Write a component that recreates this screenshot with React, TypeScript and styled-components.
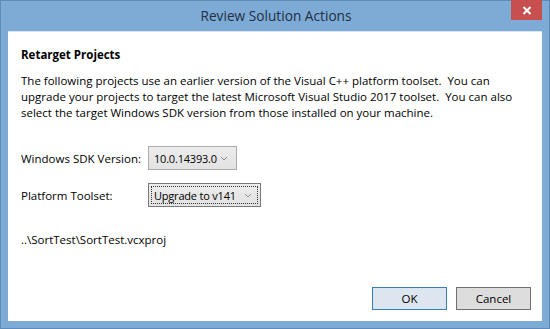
import { createGlobalStyle } from 'styled-components'
import styled from 'styled-components'

const GlobalStyle = createGlobalStyle`
  html, body {
    margin: 0;
    padding: 0;
    background: #ffffff;
  }
  * {
    box-sizing: border-box;
  }
`

const font = `"Open Sans", "Noto Sans", "Liberation Sans", sans-serif`

function Chevron() {
  return (
    <svg width="8" height="5" viewBox="0 0 8 5">
      <path d="M1 1 L4 4 L7 1" fill="none" stroke="#8a8a8a" strokeWidth="1" />
    </svg>
  )
}

function CloseGlyph() {
  return (
    <svg width="10" height="9" viewBox="0 0 10 9">
      <path d="M1.5 1 L8.5 8 M8.5 1 L1.5 8" stroke="#ffffff" strokeWidth="2" />
    </svg>
  )
}

type ComboProps = {
  value: string
  width: number
  focused?: boolean
}

function Combo({ value, width, focused }: ComboProps) {
  return (
    <ComboBox $width={width} $focused={focused}>
      <ComboInner $focused={focused}>
        <span>{value}</span>
        <Chevron />
      </ComboInner>
    </ComboBox>
  )
}

export default function App() {
  return (
    <>
      <GlobalStyle />
      <Window>
        <TitleBar>
          <span />
          <Title>Review Solution Actions</Title>
          <CloseButton>
            <CloseGlyph />
          </CloseButton>
        </TitleBar>
        <Content>
          <Heading>Retarget Projects</Heading>
          <Paragraph>
            The following projects use an earlier version of the Visual C++ platform toolset.&nbsp; You can
            <br />
            upgrade your projects to target the latest Microsoft Visual Studio 2017 toolset.&nbsp; You can also
            <br />
            select the target Windows SDK version from those installed on your machine.
          </Paragraph>
          <FieldRow $gap={25}>
            <Label>Windows SDK Version:</Label>
            <Combo value="10.0.14393.0" width={89} />
          </FieldRow>
          <FieldRow $gap={13}>
            <Label>Platform Toolset:</Label>
            <Combo value="Upgrade to v141" width={113} focused />
          </FieldRow>
          <ProjectPath>..\SortTest\SortTest.vcxproj</ProjectPath>
          <Footer>
            <Button $primary>OK</Button>
            <Button>Cancel</Button>
          </Footer>
        </Content>
      </Window>
    </>
  )
}

const Window = styled.div`
  width: 550px;
  height: 329px;
  background: #7eabd6;
  border: 1px solid #5f8bbb;
  display: flex;
  flex-direction: column;
  font-family: ${font};
`

const TitleBar = styled.div`
  height: 30px;
  display: grid;
  grid-template-columns: 1fr auto 1fr;
  align-items: start;
`

const Title = styled.div`
  font-size: 13.7px;
  line-height: 30px;
  color: #1f2f44;
  padding-left: 2px;
`

const CloseButton = styled.div`
  justify-self: end;
  width: 31px;
  height: 20px;
  margin-right: 7px;
  margin-top: -1px;
  background: #c74f50;
  display: flex;
  align-items: center;
  justify-content: center;
`

const Content = styled.div`
  flex: 1;
  margin: 0 7px 7px 7px;
  background: #ffffff;
  border-top: 1px solid #d9e6f3;
  padding: 15px 11px 11px 13px;
  display: flex;
  flex-direction: column;
  font-size: 11.5px;
  color: #000000;
`

const Heading = styled.div`
  font-weight: 700;
  line-height: 16px;
`

const Paragraph = styled.p`
  margin: 10px 0 0 0;
  line-height: 16px;
  white-space: nowrap;
`

const FieldRow = styled.div<{ $gap: number }>`
  display: flex;
  align-items: center;
  margin-top: ${(p) => p.$gap}px;
`

const Label = styled.div`
  width: 127px;
  flex: none;
`

const ComboBox = styled.div<{ $width: number; $focused?: boolean }>`
  width: ${(p) => p.$width}px;
  flex: none;
  height: 24px;
  border: 1px solid ${(p) => (p.$focused ? '#7a7a7a' : '#acacac')};
  background: linear-gradient(#ececec, #e2e2e2);
  padding: 2px;
`

const ComboInner = styled.div<{ $focused?: boolean }>`
  height: 100%;
  border: 1px dotted ${(p) => (p.$focused ? '#333333' : 'transparent')};
  display: flex;
  align-items: center;
  justify-content: space-between;
  padding: 0 5px 0 2px;
  white-space: nowrap;
  font-size: 11px;
  letter-spacing: -0.2px;
`

const ProjectPath = styled.div`
  margin-top: 25px;
  line-height: 16px;
`

const Footer = styled.div`
  margin-top: auto;
  display: flex;
  justify-content: flex-end;
  gap: 9px;
`

const Button = styled.div<{ $primary?: boolean }>`
  width: 75px;
  height: 23px;
  border: 1px solid ${(p) => (p.$primary ? '#3c7fb1' : '#707070')};
  background: ${(p) => (p.$primary ? '#dde6ef' : '#dddddd')};
  box-shadow: ${(p) => (p.$primary ? 'inset 0 0 0 1px #d4e6f5' : 'none')};
  display: flex;
  align-items: center;
  justify-content: center;
  font-size: 11.5px;
`
